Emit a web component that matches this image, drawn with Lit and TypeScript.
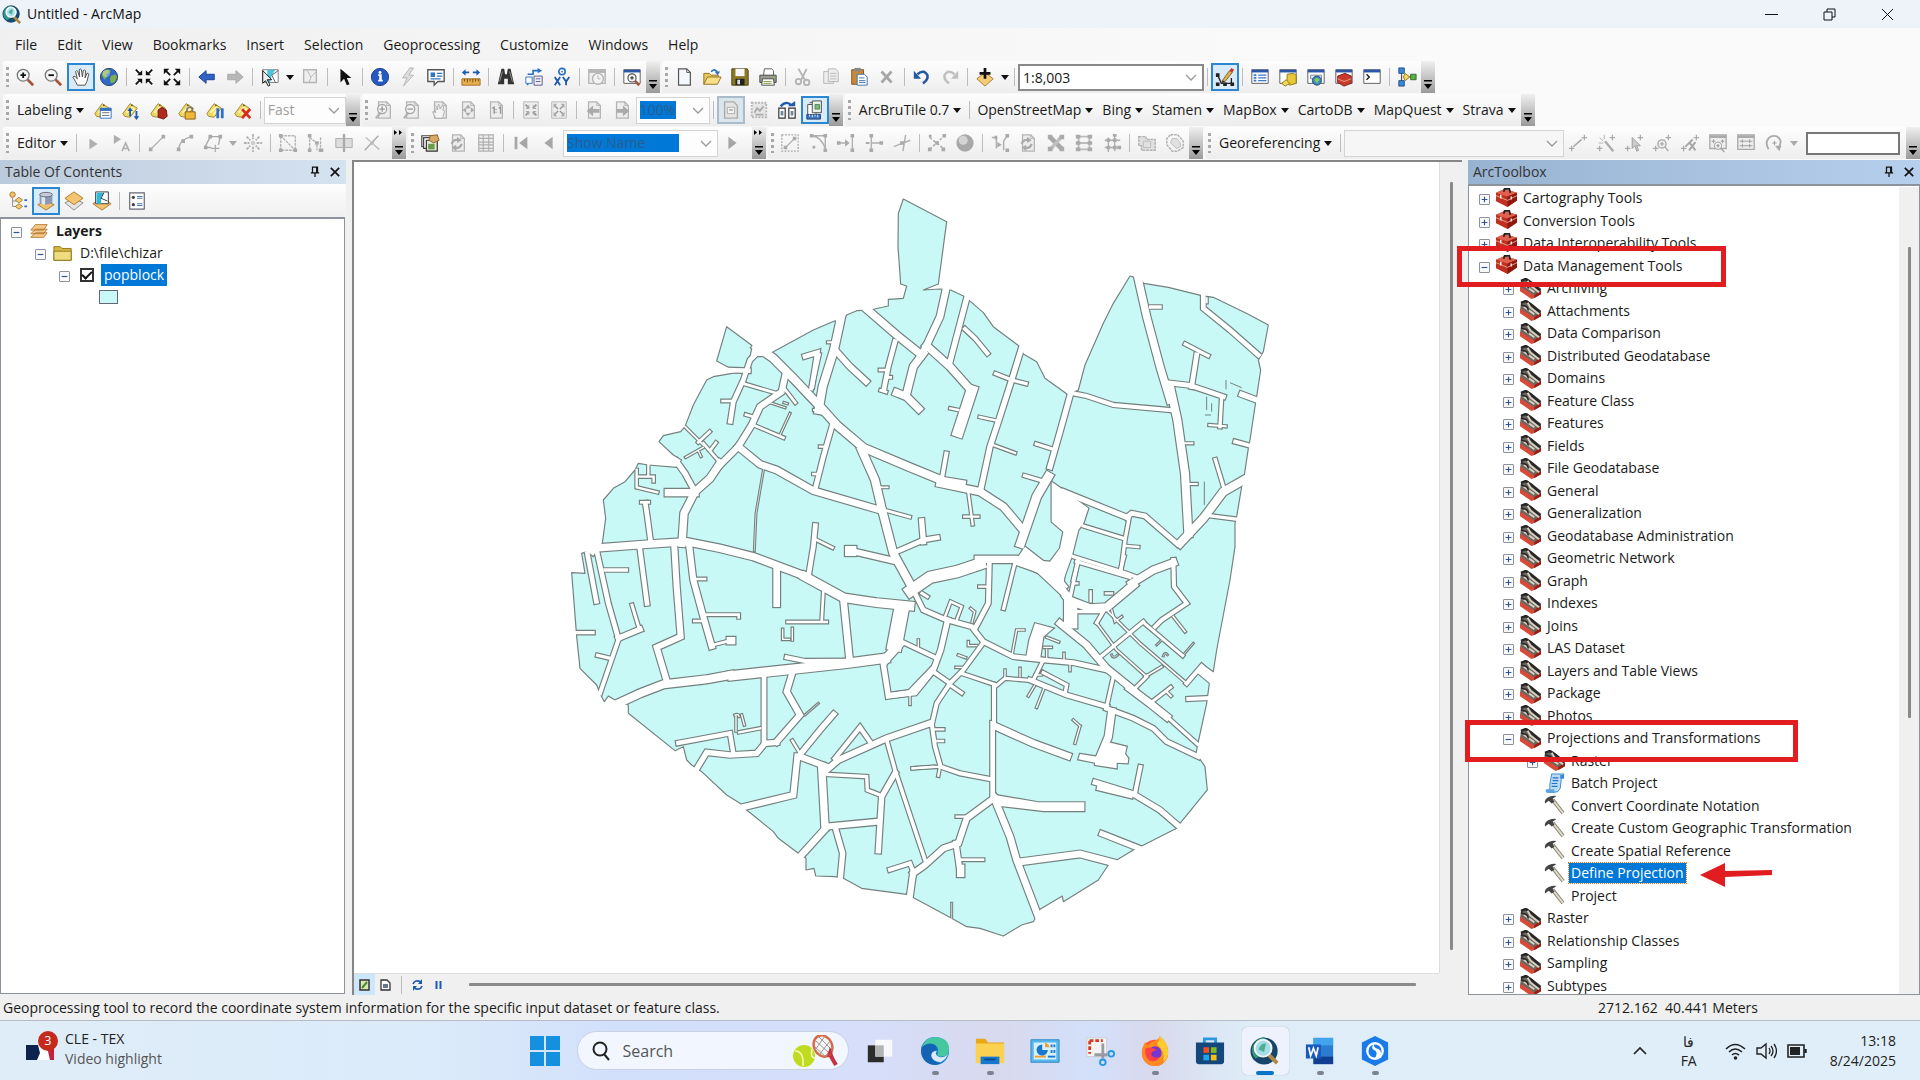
import { LitElement, html, svg, css } from "lit";
import { customElement } from "lit/decorators.js";
import { classMap } from "lit/directives/class-map.js";

/* ---------- icon set, drawn on a 22 x 22 grid ---------- */
const G = "#b4b4b4";
const tag = svg`<path d="M2 15L10 4l8 5-8 10-6-1z" fill="#f0d860" stroke="#9a8430"/><path d="M6 14l7-7M9 16l6-7" stroke="#fff6b8" stroke-width="2"/><circle cx="12" cy="6" r="1" fill="#6a5a20"/>`;
const page = svg`<path d="M5 2h9l4 4v14H5z" fill="#ededed" stroke="${G}" stroke-width="1.4"/><path d="M14 2v4h4" fill="none" stroke="${G}"/>`;
const win = svg`<path d="M2 3h18v15H2z" fill="#fff" stroke="#555"/><path d="M2 3h18v3H2z" fill="#2a55a8"/>`;
const cross = svg`<path d="M1 17h6M4 14v6M15 5h6M18 2v6" stroke="#aaa" stroke-width="1.4"/>`;

const icons: Record<string, any> = {
  zoomIn: svg`<path d="M14 14l6 6" stroke="#a4573a" stroke-width="3"/><circle cx="9" cy="9" r="6.5" fill="#f4f4f4" stroke="#777" stroke-width="1.4"/><path d="M6 9h6M9 6v6" stroke="#111" stroke-width="2"/>`,
  zoomOut: svg`<path d="M14 14l6 6" stroke="#a4573a" stroke-width="3"/><circle cx="9" cy="9" r="6.5" fill="#f4f4f4" stroke="#777" stroke-width="1.4"/><path d="M6 9h6" stroke="#111" stroke-width="2"/>`,
  hand: svg`<path d="M7 20l-2-4-3-5q1-2 3 0l2 2L5 5q1-2 2.500 0l2 6L9 3q1-2 2.500 0l1 8 1-7q2-1.500 2.500 0l-.5 8 2-5q2-.5 2 1l-2 8-2 4z" fill="#fff" stroke="#555" stroke-width="1.100"/>`,
  globe: svg`<circle cx="11" cy="11" r="9.500" fill="#2f68c8"/><path d="M4 5q5-4 9-1l-2 3-3 1 1 3-3 3-3-5zM13 10l5-2 2 3-3 6-4 1-1-4z" fill="#7cae4c"/><circle cx="8" cy="7" r="4" fill="#fff" opacity=".35"/><circle cx="11" cy="11" r="9.500" fill="none" stroke="#24406e"/>`,
  shrink: svg`<path d="M2 3l5 5M20 3l-5 5M2 19l5-5M20 19l-5-5" stroke="#111" stroke-width="2"/><path d="M9 3.500V9H3.500zM13 3.500V9h5.500zM9 18.500V13H3.500zM13 18.500V13h5.500z" fill="#111"/>`,
  grow: svg`<path d="M4 4l5 5M18 4l-5 5M4 18l5-5M18 18l-5-5" stroke="#111" stroke-width="2"/><path d="M2 2h6L2 8zM20 2h-6l6 6zM2 20h6l-6-6zM20 20h-6l6-6z" fill="#111"/>`,
  back: svg`<path d="M2 11l8-7v4h9v6h-9v4z" fill="#2f62c4" stroke="#16408c"/>`,
  fwd: svg`<path d="M20 11l-8-7v4H3v6h9v4z" fill="#b8b8b8" stroke="#a8a8a8"/>`,
  selectFeat: svg`<path d="M3 3h17v14H3z" fill="#fff" stroke="#777"/><path d="M8 3h9l-4 6-2 8H8z" fill="#4cc4dc"/><path d="M13 9l7-5M13 9l4 8" stroke="#555"/><path d="M3 4v14l3-3 3 6 2-1-3-6h5z" fill="#eee" stroke="#111"/>`,
  clearSel: svg`<path d="M4 3h14v14H4z" fill="#eee" stroke="${G}" stroke-width="1.500"/><path d="M8 4l4 7 6-6M12 11l-2 6" fill="none" stroke="${G}"/>`,
  arrow: svg`<path d="M6 2v15l4-4 3 7 3-1-3-7h5z" fill="#111"/>`,
  info: svg`<circle cx="11" cy="11" r="9.500" fill="#2558c0" stroke="#1c3f86"/><path d="M9 9h3v6h2H9h2v-5" stroke="#fff" stroke-width="1.800" fill="none"/><circle cx="11" cy="6" r="1.600" fill="#fff"/>`,
  bolt: svg`<path d="M13 1L5 12h5l-4 9L17 9h-5l5-8z" fill="#ddd" stroke="${G}"/>`,
  popup: svg`<path d="M2 3h18v13h-7l-4 4v-4H2z" fill="#fff" stroke="#555" stroke-width="1.500"/><path d="M5 6h5v5H5z" fill="#3475c0"/><path d="M12 7h6M12 10h6M5 13h11" stroke="#3475c0" stroke-width="1.500"/>`,
  measure: svg`<path d="M1 13h20v7H1z" fill="#e8b04c" stroke="#a06a20"/><path d="M4 13v3M7 13v4M10 13v3M13 13v4M16 13v3M19 13v3" stroke="#704810"/><path d="M1 6l4-3.500v7zM21 6l-4-3.500v7zM5 5h4v2H5zM13 5h4v2h-4z" fill="#1c5ab0"/>`,
  find: svg`<path d="M6 2h3l1 6h2l1-6h3l4 17h-7v-6H9v6H2z" fill="#333"/><path d="M4 16l3-11M18 16L15 5" stroke="#999"/>`,
  route: svg`<path d="M4 8h6v-4h6M4 20v-7" fill="none" stroke="#2a6fc0" stroke-width="1.800"/><path d="M15 1l5 3-5 3z" fill="#2a6fc0"/><path d="M2 11h7v7H2z" fill="#fff" stroke="#2a6fc0"/><path d="M11 10h9v10h-9z" fill="#eef" stroke="#557"/><path d="M13 13h5M13 16h5" stroke="#557"/>`,
  goxy: svg`<circle cx="11" cy="5" r="3.500" fill="none" stroke="#2a6fc0" stroke-width="1.800"/><circle cx="11" cy="5" r="1" fill="#2a6fc0"/><path d="M3 11l6 9M9 11l-6 9M12 11l3.500 5L19 11M15.500 16v4" stroke="#1c5ab0" stroke-width="2" fill="none"/>`,
  time: svg`<path d="M2 3h18v15H2z" fill="#eee" stroke="${G}" stroke-width="1.500"/><path d="M2 5h18" stroke="${G}" stroke-width="3"/><circle cx="12" cy="13" r="6" fill="#f4f4f4" stroke="${G}" stroke-width="1.500"/><path d="M12 9v4h3" fill="none" stroke="${G}"/>`,
  viewer: svg`${win}<path d="M14 15l5 5" stroke="#a4573a" stroke-width="3"/><circle cx="11" cy="12" r="4.500" fill="#f4f4f4" stroke="#555" stroke-width="1.300"/><path d="M9 12h4M11 10v4" stroke="#111"/>`,
  newDoc: svg`<path d="M5 2h9l4 4v14H5z" fill="#f4f8fd" stroke="#555" stroke-width="1.300"/><path d="M14 2v4h4" fill="none" stroke="#555"/>`,
  open: svg`<path d="M2 19V7h6l2 2h8v3" fill="#e8c858" stroke="#907020"/><path d="M2 19l4-8h15l-4 8z" fill="#f8e08a" stroke="#907020"/><path d="M10 5q5-4 7 1" fill="none" stroke="#2a6fc0" stroke-width="1.800"/><path d="M14 5h6l-3 4z" fill="#2a6fc0"/>`,
  save: svg`<path d="M2 2h17l1 2v16H2z" fill="#8a7a28" stroke="#44400f"/><path d="M6 2h10v8H6z" fill="#f6f6f6"/><path d="M6 13h10v7H6z" fill="#222"/><path d="M8 14h3v5H8z" fill="#ddd"/>`,
  print: svg`<path d="M7 2h8l2 2v6H6z" fill="#fff" stroke="#555"/><path d="M2 9h18v8H2z" fill="#9a9a90" stroke="#444"/><path d="M5 13h12l1 7H4z" fill="#fff" stroke="#444"/><path d="M6 16h9M6 18h9" stroke="#7a9a3a"/><circle cx="18" cy="11" r="1" fill="#7c4"/>`,
  cut: svg`<path d="M6 2l7 12M15 2L9 14" stroke="${G}" stroke-width="2"/><circle cx="6" cy="16" r="3" fill="none" stroke="${G}" stroke-width="2"/><circle cx="15" cy="17" r="3" fill="none" stroke="${G}" stroke-width="2"/>`,
  copy: svg`<path d="M3 5h8l3 3v10H3z" fill="#eee" stroke="${G}"/><path d="M8 2h8l3 3v11H8z" fill="#eee" stroke="${G}"/><path d="M10 7h7M10 10h7M10 13h7" stroke="${G}"/>`,
  paste: svg`<path d="M3 3h13v16H3z" fill="#c88a3a" stroke="#7a4f18"/><path d="M6 1h7v4H6z" fill="#888"/><path d="M9 8h8l3 3v9H9z" fill="#fff" stroke="#3a6cb0"/><path d="M11 12h6M11 15h7M11 17h7" stroke="#3a6cb0"/>`,
  del: svg`<path d="M5 5l11 12M16 5L5 17" stroke="#a6a6a6" stroke-width="3"/>`,
  undo: svg`<path d="M6 8q7-6 11 1 1 5-5 9" fill="none" stroke="#2458a0" stroke-width="2.800"/><path d="M2 4v9h8z" fill="#2458a0"/>`,
  redo: svg`<path d="M16 8q-7-6-11 1-1 5 5 9" fill="none" stroke="#c0c0c0" stroke-width="2.800"/><path d="M20 4v9h-8z" fill="#c0c0c0"/>`,
  addData: svg`<path d="M11 6l9 7-9 8-9-8z" fill="#f4cc78" stroke="#a87828"/><path d="M11 1v12M5 7h12" stroke="#111" stroke-width="3"/>`,
  editTb: svg`<path d="M3 9l4 9h11M18 18V12" fill="none" stroke="#222" stroke-width="1.500"/><path d="M1 7h4v4H1zM1 17h4v4H1zM9 17h4v4H9zM17 17h4v4h-4z" fill="#222"/><path d="M8 15l8-11 3 2-8 10z" fill="#e8b04c" stroke="#7a5a20"/><path d="M16 4l2-3 3 2-2 3z" fill="#c33"/><path d="M8 15l3 1-4 2z" fill="#222"/>`,
  tocWin: svg`${win}<path d="M4 8h3v2H4zM4 11h3v2H4zM4 14h3v2H4z" fill="#3a78c8"/><path d="M9 9h9M9 12h9M9 15h9" stroke="#3a78c8" stroke-width="1.500"/>`,
  catalog: svg`${win}<path d="M10 8l7-1 3 2v9l-7 2-3-2z" fill="#e8c838" stroke="#8a7418"/><path d="M4 18l5-4 4 4-5 3z" fill="#f0d858" stroke="#8a7418"/>`,
  searchWin: svg`${win}<path d="M5 9h12v4H5z" fill="#dce8f4" stroke="#789"/><circle cx="12" cy="15" r="5" fill="#3a88c8" stroke="#246"/><path d="M9 14q3-4 6 0l-3 4z" fill="#8c5"/>`,
  toolWin: svg`${win}<path d="M4 10l8-3 7 3v8l-8 3-7-4z" fill="#c83a2c" stroke="#7a1c14"/><path d="M4 13l7 3 8-3" stroke="#f0a090" fill="none"/>`,
  python: svg`${win}<path d="M5 8l3 3-3 3" fill="none" stroke="#222" stroke-width="1.600"/>`,
  model: svg`<path d="M5 5v12M8 11h8" stroke="#555" stroke-width="1.300"/><path d="M2 1h6v6H2zM2 15h6v6H2z" fill="#3a88d8" stroke="#1c4c88"/><path d="M9 7l5 4-5 4-2-4z" fill="#f0d858" stroke="#8a7418"/><path d="M15 8h6v6h-6z" fill="#58b048" stroke="#2c6a20"/>`,
  lab1: svg`${tag}<path d="M8 9h12v11H8z" fill="#fff" stroke="#2a6fc0"/><path d="M8 9h12v3H8z" fill="#2a6fc0"/><path d="M10 14h8M10 17h8" stroke="#666"/>`,
  lab2: svg`${tag}<path d="M10 10v8M17 12v8" stroke="#1c5ab0" stroke-width="2"/><path d="M7 12l3-4 3 4zM14 18l3 4 3-4z" fill="#1c5ab0"/>`,
  lab3: svg`${tag}<path d="M10 11l4-3 5 3 1 7-4 3-6-2z" fill="#b02a20" stroke="#6a1410"/>`,
  lab4: svg`${tag}<path d="M11 13v-3q3-4 6 0v3" fill="none" stroke="#777" stroke-width="1.800"/><path d="M9 13h11v8H9z" fill="#f0b838" stroke="#8a5c10"/>`,
  lab5: svg`${tag}<path d="M14 9v11M19 9v11" stroke="#2a6fd0" stroke-width="3"/>`,
  lab6: svg`${tag}<path d="M10 10l9 10M19 10l-9 10" stroke="#d82a20" stroke-width="3"/>`,
  lyZin: svg`${page}<path d="M8 13l-6 7" stroke="${G}" stroke-width="2.500"/><circle cx="9" cy="10" r="5" fill="#f4f4f4" stroke="#a6a6a6" stroke-width="1.500"/><path d="M6 10h6M9 7v6" stroke="#999" stroke-width="1.500"/>`,
  lyZout: svg`${page}<path d="M8 13l-6 7" stroke="${G}" stroke-width="2.500"/><circle cx="9" cy="10" r="5" fill="#f4f4f4" stroke="#a6a6a6" stroke-width="1.500"/><path d="M6 10h6" stroke="#999" stroke-width="1.500"/>`,
  lyPan: svg`${page}<path d="M6 20l-3-7q1-1 3 1L5 7q2-2 3 4l1-6q2-1 2 5l3-4q2 0 0 5l2 1-2 8z" fill="#f4f4f4" stroke="#a6a6a6"/>`,
  lyFull: svg`${page}<path d="M11 5l3 4H8zM11 18l3-4H8zM5 11l4-3v6zM18 11l-4-3v6z" fill="#aaa"/>`,
  ly11: svg`${page}<path d="M7 9l2-1v7M11 10v1M11 13v1M14 9l2-1v7" stroke="#999" stroke-width="1.600" fill="none"/>`,
  lyIn: svg`<path d="M3 2h16v18H3z" fill="#ededed" stroke="${G}"/><path d="M5 5l4 4M17 5l-4 4M5 17l4-4M17 17l-4-4" stroke="#999" stroke-width="2"/><path d="M9 5v5H5zM13 5v5h4zM9 17v-5H5zM13 17v-5h4z" fill="#aaa"/>`,
  lyOut: svg`<path d="M3 2h16v18H3z" fill="#ededed" stroke="${G}"/><path d="M6 6l4 4M16 6l-4 4M6 16l4-4M16 16l-4-4" stroke="#999" stroke-width="1.600"/><path d="M5 4h4L5 9zM17 4h-4l4 5zM5 18h4l-4-5zM17 18h-4l4-5z" fill="#aaa"/>`,
  lyBack: svg`${page}<path d="M3 12l7-6v4h7v4h-7v4z" fill="#aaa"/>`,
  lyFwd: svg`${page}<path d="M19 12l-7-6v4H5v4h7v4z" fill="#aaa"/>`,
  draft: svg`<path d="M4 2h10l4 4v14H4z" fill="#e4e4e4" stroke="#aaa" stroke-width="1.500"/><path d="M7 8h8v7H7z" fill="#f4f4f4" stroke="#aaa"/><path d="M9 11h4" stroke="#999" stroke-width="1.500"/>`,
  frameF: svg`<path d="M3 3h16v16H3z" fill="#e6e6e6" stroke="${G}" stroke-dasharray="2 1.500" stroke-width="2"/><path d="M6 14l3-5 3 3 4-5M7 16h9" fill="none" stroke="#aaa" stroke-width="2"/>`,
  layoutSw: svg`<path d="M2 9h7v11H2zM13 9h7v11h-7z" fill="#fff" stroke="#333" stroke-width="1.300"/><path d="M4 7q6-7 12-1" fill="none" stroke="#1c5ab0" stroke-width="2.600"/><path d="M12 7h8V1z" fill="#1c5ab0"/><path d="M4 12h3v5H4zM15 12h3v5h-3z" fill="#6a8a9a"/>`,
  dataDr: svg`<path d="M3 5h9v11H3zM5 3h9v11" fill="#fff" stroke="#444"/><path d="M8 1h10v13H8z" fill="#e8f4e8" stroke="#444"/><path d="M11 5h5v5h-5z" fill="#88b868" stroke="#486"/><path d="M2 16h15v5H2z" fill="#3a78c8" stroke="#1c3c70"/><path d="M5 16v2M8 16v3M11 16v2M14 16v3" stroke="#fff"/>`,
  play: svg`<path d="M7 4v14l9-7z" fill="#a6a6a6"/>`,
  prev: svg`<path d="M15 4v14l-9-7z" fill="#a6a6a6"/>`,
  first: svg`<path d="M18 4v14l-9-7zM4 4h3v14H4z" fill="#a6a6a6"/>`,
  edArrow: svg`<path d="M6 6v12l9-6z" fill="#b0b0b0"/>`,
  edAnno: svg`<path d="M2 2v10l8-5z" fill="#b0b0b0"/><path d="M11 20l4-9 4 9M12 17h6" fill="none" stroke="#b0b0b0" stroke-width="1.800"/>`,
  seg: svg`<path d="M4 18L18 4" stroke="#aaa" stroke-width="1.300"/><path d="M2 16h4v4H2zM16 2h4v4h-4z" fill="#aaa"/>`,
  arc: svg`<path d="M4 18Q5 7 18 4" fill="none" stroke="#aaa" stroke-width="1.300"/><path d="M2 16h4v4H2zM7 7h4v4H7zM16 2h4v4h-4z" fill="#aaa"/>`,
  poly: svg`<path d="M8 4h11l-2 9M8 4L2 16h7" fill="none" stroke="#aaa" stroke-width="1.500"/><path d="M6 2h4v4H6zM17 2h4v4h-4zM1 14h4v4H1z" fill="#aaa"/><path d="M9 17h9M13.500 13v8" stroke="#aaa" stroke-width="1.300"/>`,
  star: svg`<path d="M11 1v6M11 15v6M1 11h6M15 11h6M4 4l4 4M18 4l-4 4M4 18l4-4M18 18l-4-4" stroke="#b0b0b0" stroke-width="2" stroke-dasharray="3 1"/><circle cx="11" cy="11" r="2.500" fill="#ccc"/>`,
  edv: svg`<path d="M3 3h16v16H3zM3 3l16 16" fill="none" stroke="#b4b4b4" stroke-width="1.500" stroke-dasharray="3 1"/><path d="M1 1h4v4H1zM17 17h4v4h-4zM1 17h4v4H1z" fill="#aaa"/>`,
  resh: svg`<path d="M4 3v16M4 5l8 6v8M16 5v14" fill="none" stroke="#b0b0b0" stroke-width="1.500" stroke-dasharray="3 1"/><path d="M2 1h4v4H2zM2 17h4v4H2zM10 9h4v4h-4zM14 17h5v4h-5z" fill="#aaa"/>`,
  cutp: svg`<path d="M2 6h18v10H2z" fill="#ddd" stroke="#aaa"/><path d="M11 1v20" stroke="#aaa" stroke-width="2.500"/>`,
  split: svg`<path d="M3 19L18 3" stroke="#aaa" stroke-width="1.500"/><path d="M4 5l5 4M13 13l6 5" stroke="#bbb" stroke-width="1.500"/><path d="M9 9h4v4H9z" fill="#bbb"/>`,
  tree: svg`<path d="M2 3h12v12H2z" fill="#fff" stroke="#444" stroke-width="1.300"/><path d="M4 5h12v12H4z" fill="#fff" stroke="#444" stroke-width="1.300"/><path d="M7 8h12v12H7z" fill="#dfe8d0" stroke="#333" stroke-width="1.300"/><path d="M9 12h7v6H9z" fill="#6a9a4a"/><path d="M11 3l8-1 2 6-6 3-5-3z" fill="#d8a868" stroke="#8a5c28"/>`,
  refresh: svg`${page}<path d="M4 12q2-6 8-4M15 12q-2 6-8 4" fill="none" stroke="#aaa" stroke-width="2.500"/><path d="M10 4l5 4-5 3zM9 20l-5-4 5-3z" fill="#aaa"/>`,
  table: svg`<path d="M3 2h16v18H3zM3 6h16M3 10h16M3 13h16M3 17h16M8 2v18M14 2v18" fill="#eee" stroke="#b0b0b0" stroke-width="1.300"/>`,
  t1: svg`<path d="M2 2h18v18H2z" fill="none" stroke="#aaa" stroke-width="1.400" stroke-dasharray="2 1.500"/><path d="M6 16L16 6" stroke="#aaa" stroke-width="1.300"/><path d="M4 14h4v4H4zM14 4h4v4h-4z" fill="#aaa"/>`,
  t2: svg`<path d="M3 3h16v16M5 3q10 2 14 14" fill="none" stroke="#b0b0b0" stroke-width="1.500"/><path d="M2 1h4v4H2zM17 1h4v4h-4zM17 17h4v4h-4zM5 14h3v3H5z" fill="#aaa"/>`,
  t3: svg`<path d="M18 3v16M2 11h11" stroke="#b0b0b0" stroke-width="1.500"/><path d="M10 7l5 4-5 4zM1 9h4v4H1zM16 1h4v4h-4zM16 17h4v4h-4z" fill="#aaa"/>`,
  t4: svg`<path d="M8 3v16M8 11h11" stroke="#b0b0b0" stroke-width="1.500"/><path d="M6 1h4v4H6zM6 17h4v4H6zM17 9h4v4h-4zM2 10h4v2H2z" fill="#aaa"/>`,
  t5: svg`<path d="M2 15l18-7M15 2l-3 18" stroke="#b0b0b0" stroke-width="1.600"/><path d="M9 9h4v4H9z" fill="#aaa"/>`,
  t6: svg`<path d="M3 18L19 3M3 5l15 12" stroke="#aaa" stroke-width="1.600" stroke-dasharray="3 2"/><path d="M1 16h4v4H1zM9 9h4v4H9zM17 1h4v4h-4zM16 16h4v4h-4zM2 2h3v3H2z" fill="#aaa"/>`,
  sphere: svg`<circle cx="11" cy="11" r="9.500" fill="#a8a8a8"/><circle cx="9" cy="8" r="5" fill="#d4d4d4"/>`,
  t7: svg`<path d="M2 5h5v12M19 3l-4 6v10" fill="none" stroke="#b0b0b0" stroke-width="1.600"/><path d="M8 10l5 3-5 3zM17 1h4v4h-4zM17 17h4v4h-4zM5 3h3v4H5z" fill="#aaa"/>`,
  t8: svg`<path d="M5 5l13 13" stroke="#a8a8a8" stroke-width="5"/><path d="M17 4L5 18" stroke="#c0c0c0" stroke-width="4"/><path d="M2 2h5v5H2zM15 2h5v5h-5zM2 15h5v5H2zM15 15h5v5h-5z" fill="#aaa"/>`,
  t9: svg`<path d="M4 4h14M4 11h14M4 18h14M5 4v14M17 4v14" stroke="#bbb" stroke-width="2"/><path d="M2 2h5v4H2zM15 2h5v4h-5zM2 9h5v4H2zM15 9h5v4h-5zM2 16h5v4H2zM15 16h5v4h-5z" fill="#aaa"/>`,
  t10: svg`<path d="M3 8h17M3 16h17M7 5v16M14 2v18" stroke="#b0b0b0" stroke-width="1.500"/><path d="M5 6h4v4H5zM12 6h4v4h-4zM5 14h4v4H5zM12 14h4v4h-4zM17 14h4v4h-4zM12 1h4v3h-4z" fill="#aaa"/>`,
  t11: svg`<path d="M2 4h8v3h10v12H5v-5H2z" fill="#e0e0e0" stroke="#b0b0b0" stroke-width="1.600" stroke-dasharray="3 1"/><path d="M7 9h8v7H7z" fill="none" stroke="#bbb"/>`,
  t12: svg`<path d="M6 2h8l6 7v7l-6 4H8L2 13V6z" fill="none" stroke="#b0b0b0" stroke-width="1.600" stroke-dasharray="3 1"/><path d="M8 6h5l4 5v4l-4 2-7-6z" fill="#e0e0e0" stroke="#bbb"/>`,
  g1: svg`${cross}<path d="M6 15l9-8" stroke="#aaa" stroke-width="1.600"/>`,
  g2: svg`${cross}<path d="M10 9l9 11" stroke="#aaa" stroke-width="2.500"/><path d="M9 2v5M4 5l4 4M3 11h5" stroke="#aaa"/>`,
  g3: svg`${cross}<path d="M9 5v12l3-3 2 6 2-1-2-5h4z" fill="#ccc" stroke="#999"/>`,
  g4: svg`${cross}<circle cx="11" cy="12" r="4.500" fill="#eee" stroke="#aaa" stroke-width="1.500"/><path d="M9 12h4M11 10v4M14 15l4 5" stroke="#aaa" stroke-width="1.500"/>`,
  g5: svg`${cross}<path d="M10 10l7 9M17 10l-7 9M6 15l8-8" stroke="#a6a6a6" stroke-width="2.200"/>`,
  g6: svg`<path d="M2 2h18v15H2z" fill="#eee" stroke="#aaa" stroke-width="1.500"/><path d="M2 4h18" stroke="#aaa" stroke-width="3"/><path d="M4 9h4M6 7v4M14 9h4M16 7v4" stroke="#999"/><circle cx="11" cy="14" r="4" fill="#f4f4f4" stroke="#999"/><path d="M14 17l4 4M9 14h4M11 12v4" stroke="#999" stroke-width="1.300"/>`,
  g7: svg`<path d="M2 2h18v16H2z" fill="#eee" stroke="#aaa" stroke-width="1.500"/><path d="M2 4h18" stroke="#aaa" stroke-width="3"/><path d="M4 9h14M4 14h14M7 7v4M7 12v4M15 7v4M15 12v4" stroke="#999"/>`,
  g8: svg`<path d="M5 18Q0 9 7 4q8-3 11 4 1 5-3 9" fill="none" stroke="#aaa" stroke-width="2"/><path d="M12 14h7l-2 6z" fill="#aaa"/><path d="M9 11h5M11.500 8.500v5" stroke="#999"/>`,
  listDraw: svg`<circle cx="5" cy="4" r="3" fill="#f0c070" stroke="#a87828"/><path d="M5 7v10h6M5 11h6" fill="none" stroke="#888"/><path d="M12 7l4 3-4 3-4-3zM12 14l4 3-4 3-4-3z" fill="#f4cc78" stroke="#a87828"/><path d="M18 10h3M18 17h3" stroke="#2a6fc0" stroke-width="2"/>`,
  listSrc: svg`<path d="M11 21l-9-6 9-4 9 4z" fill="#f0c070" stroke="#a87828"/><path d="M4 4v9q7 4 14 0V4z" fill="#8a9ab0"/><path d="M6 5v9q2 1 4 1V5z" fill="#dfe6f0"/><ellipse cx="11" cy="4" rx="7" ry="2.500" fill="#c4ccd8" stroke="#667"/>`,
  listVis: svg`<path d="M1 13l10 8 10-8-10-5z" fill="#e4e4e4" stroke="#888"/><path d="M1 8l10 7 10-7L11 1z" fill="#f4c470" stroke="#a87828"/>`,
  listSel: svg`<path d="M1 14l10 7 10-7-10-6z" fill="#f4c470" stroke="#a87828"/><path d="M4 1h14v13H4z" fill="#fff" stroke="#333"/><path d="M5 2h8l-3 5v7H5z" fill="#30b8d8"/><path d="M13 2l-3 6 7 3" fill="none" stroke="#333"/>`,
  options: svg`<path d="M3 2h16v18H3z" fill="#fff" stroke="#667" stroke-width="1.300"/><circle cx="7" cy="7" r="1.800" fill="#444"/><circle cx="7" cy="15" r="1.800" fill="#444"/><path d="M11 6h6M11 8h6M11 14h6M11 16h6" stroke="#4a7ab0" stroke-width="1.200"/>`,
  layers: svg`<path d="M2 18l5-5h13l-4 5zM2 14l5-5h13l-4 5zM2 10l5-6h13l-4 6z" fill="#f6c98a" stroke="#b07830"/>`,
  folder: svg`<path d="M1 19V4h7l2 2h10v13z" fill="#d8b840" stroke="#8a7418"/><path d="M1 19V9h19v10z" fill="#f0dc80" stroke="#8a7418"/>`,
  toolbox: svg`<path d="M0 5l9-4 13 4v8l-10 7L0 14z" fill="#c0301f"/><path d="M0 5l9-4 13 4-10 4z" fill="#e0614f"/><path d="M12 9l10-4v8l-10 7z" fill="#8e180f"/><path d="M8 4l1-3h5l1 4" fill="none" stroke="#222" stroke-width="1.800"/><path d="M0 8l12 5 10-5" stroke="#f0a090" fill="none"/><path d="M5 7v4M16 9v3" stroke="#f4e8e4" stroke-width="1.600"/>`,
  toolset: svg`<path d="M1 3l6-3 15 11v6l-7 4L0 12z" fill="#6a6660"/><path d="M0 9l15 9v3l-3 1L0 14z" fill="#d84a38"/><path d="M15 18l7-5v4l-7 4z" fill="#9c1c12"/><path d="M1 3l5-2 6 4 9 8" stroke="#262626" stroke-width="2.500" fill="none"/><path d="M8 3l3 5 9 7M4 7l11 8" stroke="#d8d0c0" stroke-width="2" fill="none"/><path d="M1 5l6 2 2 4" stroke="#262626" stroke-width="1.600" fill="none"/>`,
  hammer: svg`<path d="M9 5l11 14" stroke="#8a8674" stroke-width="4"/><path d="M9 5l11 14" stroke="#e0dccc" stroke-width="2"/><path d="M1 9q-1-5 4-7 5-2 8-1l-4 3 2 3-3 2-3-3z" fill="#444"/>`,
  script: svg`<path d="M8 1h13q-3 2-3 6l-1 9q-2 5-6 4H3q4-2 3-7z" fill="#b8dcf8" stroke="#3a88c8"/><path d="M9 5h6M9 8h6M8 11h6M8 14h6" stroke="#2a6fc0" stroke-width="1.300"/><path d="M2 17h9q-1 4 2 4H4q-3-1-2-4z" fill="#5aa4e4"/><path d="M17 2h4v4h-4z" fill="#3a88d8"/>`,
  arcmap: svg`<circle cx="10" cy="11" r="9.500" fill="#17486e"/><path d="M2 8q3-6 8-6l3 4-5 4 1 6-4 2q-5-5-3-10z" fill="#2e9a8c"/><path d="M13 14l7 7" stroke="#b08848" stroke-width="3"/><circle cx="10" cy="9" r="5.500" fill="#b4e4f0" stroke="#fff" stroke-width="1.500"/><path d="M7 9q2-4 5-3l-1 6z" fill="#4ab0a0"/>`,
};
const icon = (n: string, c = "ic") => html`<svg class=${c} viewBox="0 0 22 22" aria-hidden="true">${icons[n]}</svg>`;

const sep = html`<span class="sep"></span>`;
const grip = html`<span class="grip"></span>`;
const caret = html`<svg class="caret" viewBox="0 0 8 5" aria-hidden="true"><path d="M0 0h8L4 5z"/></svg>`;
const caretOff = html`<svg class="caret off" viewBox="0 0 8 5" aria-hidden="true"><path d="M0 0h8L4 5z"/></svg>`;
const chev = html`<svg class="chev" viewBox="0 0 12 7" aria-hidden="true"><path d="M1 1l5 5 5-5"/></svg>`;
const endCap = (more = false) => html`<button class=${classMap({ end: true, more })} aria-label="Toolbar options"><svg viewBox="0 0 10 28" aria-hidden="true">${more ? svg`<path d="M0 1l3 2.500L0 6zM5 1l3 2.500L5 6z"/>` : null}<path d="M1 17h8v1.500H1zM1 21h8l-4 5z"/></svg></button>`;
/* "|" draws a separator, "v"/"V" a disabled/enabled caret, "*" marks a pressed tool */
const tools = (list: string) => list.split(" ").map((t) => {
  if (t === "|") return sep;
  if (t === "V") return caret;
  if (t === "v") return caretOff;
  const on = t.endsWith("*"), dim = t.endsWith("~"), n = t.replace(/[*~]/, "");
  return html`<button class=${classMap({ tool: true, on, dim })} aria-label=${n}>${icon(n)}</button>`;
});
const drop = (t: string) => html`<button class="drop">${t}${caret}</button>`;

/* ---------- map geometry, three units to a pixel ---------- */
const outline = "M1030 57L1160 125 1135 312 1090 330 1140 327 1172 330 1215 350 1232 365 1270 398 1300 440 1380 500 1390 522 1430 545 1455 595 1525 645 1555 630 1575 555 1630 430 1660 370 1710 288 1723 292 1752 310 1825 322 1925 347 1960 352 2065 403 2125 435 2110 515 2095 540 2102 570 2090 650 2085 680 2070 780 2065 805 2053 885 2045 920 2030 1010 2025 1030 2025 1100 2010 1200 1970 1410 1960 1475 1925 1450 1905 1475 1948 1510 1940 1570 1915 1685 1908 1720 1935 1760 1942 1830 1860 1930 1850 1945 1745 1998 1720 2010 1670 2040 1645 2055 1615 2100 1510 2165 1507 2148 1440 2188 1420 2225 1385 2235 1330 2268 1260 2245 1220 2240 1175 2215 1058 2152 1040 2143 905 2125 850 2095 825 2090 767 2088 762 2065 738 2070 738 2035 715 2020 655 1975 640 1955 560 1890 540 1870 500 1845 425 1775 395 1755 380 1740 370 1700 345 1712 205 1600 205 1575 170 1563 145 1548 133 1565 122 1545 110 1515 60 1465 50 1370 35 1178 75 1180 65 1120 80 1115 100 1130 127 1090 137 1015 130 960 160 925 195 905 225 870 235 850 265 855 350 862 365 840 340 825 297 785 310 767 362 755 375 740 400 675 440 600 460 590 530 578 545 575 505 562 470 543 500 440 577 497 570 530 605 530 640 515 760 450 825 422 835 430 860 405 890 392 930 390 985 378 985 358 1030 355 1040 318 1022 312 1014 200 1015 100Z";

type Street = [number, string];
interface Tile { x: number; y: number; streets: Street[]; }
const tiles: Tile[] = [
  { x: 0, y: 0, streets: [
    [24, "M590 500L640 535 700 595 785 685 830 735 910 803 1050 862 1150 903 1205 912"],
    [24, "M850 380L835 450 822 510 788 620 776 690"], [18, "M830 515L870 560 918 604"],
    [22, "M900 370L1010 465 1085 525"], [22, "M1090 520L1060 560 1040 640"], [22, "M1010 638L1040 650 1076 686"],
    [20, "M1162 310L1140 410 1105 485 1085 525"], [14, "M1005 485L985 560 972 626"], [8, "M960 570h15M980 592h12M962 631L978 636"],
    [22, "M1100 497L1170 560 1228 625"], [12, "M1159 821L1145 900"], [14, "M817 735L790 830 766 925"], [7, "M780 800h12M760 882h14"],
    [20, "M535 800L600 853 650 870 760 932 960 990"], [2, "M612 860L588 1000 583 1112"],
    [22, "M480 850L450 895 405 935 372 1000 366 1090"], [18, "M676 585L665 635 600 680 575 735 535 800 480 855"],
    [8, "M555 612L650 640M488 663h32M580 735L670 773M675 628L706 668M558 704L585 712"],
    [14, "M600 510L570 540 550 600 520 665 511 724"], [14, "M500 570L565 572"],
    [3, "M660 765L690 700M620 665L675 683M672 668l10 3"], [5, "M375 740L430 795"], [8, "M430 790L480 848M449 755L415 787M468 788L450 812"], [4, "M377 832L430 802M415 812l8 17"],
    [16, "M350 845L375 880 405 935"], [22, "M325 938H405"], [7, "M230 870V922L292 937M230 890H281V904M265 852V890"],
    [14, "M256 970L262 1010 272 1085"], [8, "M244 967h22"], [14, "M735 529L772 518 756 618"], [12, "M776 525L754 625"], [6, "M804 487h18M762 690h12"],
    [14, "M766 1037L760 1100 745 1190"], [8, "M770 1080L817 1103M965 988L1049 1011"], [16, "M1085 1023L1090 1085"], [14, "M1010 1115L1090 1080 1132 1073"],
    [18, "M880 1114L1000 1142"], [30, "M870 1113h4"], [5, "M962 922h21"], [24, "M905 810L945 900 965 985 1000 1120 1055 1220"],
    [22, "M95 1105L270 1092 380 1085 480 1105 580 1130 740 1190"],
  ]},
  { x: 1140, y: 0, streets: [
    [32, "M95 632L55 755"], [16, "M84 340L30 545"], [12, "M75 447L105 475 142 520"], [16, "M246 500L215 600 175 725 150 800 122 930"],
    [10, "M167 581L215 600 258 611M289 792L340 808M254 887L305 902"], [7, "M119 711L170 722M160 795L225 819M31 685L55 690"],
    [16, "M392 640L360 755 330 860"], [12, "M390 638L440 648 520 675 690 690"],
    [22, "M592 285L620 410 660 560 690 660"], [24, "M690 620L712 720 735 880 745 1060"],
    [26, "M325 890L290 950 242 1090"], [22, "M0 910L120 935 190 980 245 1045"],
    [10, "M632 381h28M736 492L804 527M845 650L840 740"], [14, "M790 340V385L870 450 955 525M770 525L755 620M680 608L750 616 850 650"],
    [6, "M808 735L857 739M735 790h22M745 912h25M800 355v12"], [16, "M905 643L955 662"], [12, "M886 785L930 797"], [10, "M826 839L852 925"],
    [10, "M800 1006L895 1018"], [24, "M720 1090L790 1015 850 935 915 898"], [14, "M560 1012L575 1000 615 1008 712 1092"],
    [10, "M430 1038L550 1075M568 1010L555 1080 543 1172"], [16, "M370 935L560 1012"], [7, "M560 1098L595 1101M84 930L98 1033M73 1010H115"], [10, "M400 1130L560 1180 600 1195M415 1138L400 1200"],
  ]},
  { x: 0, y: 1140, streets: [
    [26, "M735 50L790 80 850 113 950 128 1050 138"], [14, "M82 -20L109 124"], [14, "M112 -20L145 130 175 235M240 -30L261 130"],
    [10, "M135 30h64M45 218h54M113 286L150 295"], [18, "M343 -40L350 80 362 230 290 262 320 362"], [18, "M388 -40L400 60 430 170 455 258"],
    [8, "M455 256L510 242M440 164H536V172M403 183h32M410 57h25"], [22, "M511 242h4"], [16, "M175 235L240 208"], [9, "M238 208L216 135"],
    [12, "M175 240L120 400"], [20, "M650 20V131"], [8, "M790 95L785 185M683 186H800"], [12, "M680 292L735 303 860 302"], [20, "M850 115L868 292"],
    [4, "M668 208v30h20M697 205v35M525 465q10-4 12 4M528 468v45M545 465l8 30"],
    [24, "M165 435L240 400 310 373 440 358 510 345"], [28, "M518 347L600 338 860 310 975 295"], [44, "M1024 150L1005 250"], [26, "M975 300L1015 255"],
    [14, "M612 345V550"], [18, "M695 345L680 395 720 465 650 545"], [16, "M650 547L615 550 590 580 510 585 440 577 405 635"],
    [13, "M355 549L510 520 520 580"], [7, "M537 517L600 505M697 542L720 580"], [2, "M775 430L735 465"],
    [16, "M821 463L780 510 715 590"], [18, "M712 590L700 705 535 745"], [18, "M720 590L800 620"], [18, "M800 630L835 600 980 535 1110 490"],
    [13, "M825 595L900 502 930 545"], [10, "M800 643L920 650 922 690 957 704"], [22, "M785 620L795 800"], [18, "M795 800L955 785"],
    [16, "M825 800L848 880 840 965M1005 640L965 710 955 872"], [20, "M720 890L800 802"], [11, "M980 540L1005 630 1095 900"], [12, "M990 929L1050 910 1060 935"],
    [16, "M968 300L985 408 1050 398 1115 330"], [7, "M1058 625L1120 620"],
  ]},
  { x: 1020, y: 1140, streets: [
    [34, "M32 92L90 52 170 35 240 12"], [22, "M235 -2L350 -2 420 30 500 105"], [24, "M500 110L520 135"],
    [24, "M510 122L570 145 620 142 700 75"], [22, "M695 70L760 30 820 8"], [12, "M820 0L822 80 860 130 785 180 765 200"],
    [10, "M530 5L690 52M672 -10L660 35M535 0L512 105"], [7, "M495 0L488 65 500 80M520 70h12M572 94v30M618 100h18"],
    [10, "M345 8L311 145"], [14, "M268 15L265 130 228 200"], [7, "M238 80h22M135 170L152 125 185 140 170 180"],
    [14, "M45 100L70 150 135 178 215 200 250 245 340 290 430 300 520 308 620 330"], [9, "M66 100L82 110"],
    [16, "M143 180L122 270 100 330 45 398 -20 405"], [12, "M5 245L105 292M100 335L150 370"], [12, "M250 248L190 330 150 370 110 430 95 495"],
    [10, "M185 340L280 372M430 300L400 360M430 338L500 375 496 396M640 350L620 440M155 378L185 399"], [12, "M282 375V500"], [14, "M278 490V720"],
    [9, "M285 380L315 355 400 362"], [14, "M390 360L500 405 620 440"], [14, "M620 445L700 475 760 505 800 545 895 590"], [20, "M480 190L560 255 620 325 700 390"], [22, "M690 385L750 430 800 470"], [10, "M795 465L895 555"],
    [40, "M512 140L512 185"], [10, "M530 155L610 155 590 188M600 292L730 185"], [5, "M590 188L650 270 740 350M625 155L720 250 860 370M735 350L785 320M820 170l35 45"],
    [9, "M730 187L848 287M700 390L740 350M750 430L812 382"], [6, "M800 395l13 13"], [12, "M860 370L905 318M865 417L925 414"],
    [22, "M635 455L625 530 600 590"], [20, "M288 500L400 550 503 588"], [12, "M95 490L105 560 122 620 180 640 275 658"], [7, "M38 625L120 620 115 647M105 508h25M112 543h17M170 770h38"],
    [18, "M285 712L200 775 175 850 130 865 75 915 40 940"], [18, "M40 935L28 1020"], [20, "M285 720L330 830 350 900 415 1070"], [8, "M185 899H249"], [16, "M168 850L178 920"], [22, "M182 925v15"],
    [20, "M365 905L540 882 640 908"], [16, "M606 821L720 866M586 667L700 702 780 750 840 802"], [12, "M721 621L705 700"], [18, "M600 683L690 705"],
    [4, "M520 480l20 18M540 498L525 550M440 232l36 14M432 262h22M385 408l18-30M432 385L410 442M315 330v25M360 325v25M335 290L350 210h22M212 145l12 10-8 32M175 285l22 8M205 245v12h25M440 268v30M492 280v22M510 310v22M30 405v28M55 240v22M635 150l10 35 20-15M405 345h18M168 322h18"],
    [2, "M155 1030v45M880 250L850 285M770 255l20-20M790 288q4-14 12-4M635 285q5 14 18 0"],
  ]},
];
const voids = "M1475 905V1025L1510 1055 1500 1105 1470 1145 1450 1143 1395 1100 1360 1152 1440 1180 1515 1255 1525 1240 1508 1205 1535 1130 1555 1050 1570 1030 1585 985 1510 930ZM1425 1330L1480 1345 1450 1370 1440 1440H1397L1408 1380ZM1560 1722L1612 1730 1640 1685 1700 1700 1695 1722 1705 1735 1703 1750 1670 1748V1765L1605 1755V1748L1555 1738ZM1305 1845L1435 1867H1573V1893H1450L1320 1878Z";
const strokes = (cls: string, extra: number) => tiles.map((t) => svg`<g class=${cls} transform="translate(${t.x} ${t.y})">${t.streets.map(([w, d]) => svg`<path d=${d} stroke-width=${w + extra}></path>`)}</g>`);
const hair = svg`<g class="hair"><path d="M1998 600v28M2010 608l35 15M1940 650v40M1955 670v25M1935 705h18M1933 905v70"/></g>`;

const mapSvg = html`<svg class="map" viewBox="0 0 1085 811" role="img" aria-label="popblock">
  <defs><clipPath id="area"><path d=${outline}></path></clipPath></defs>
  <g transform="translate(206 18) scale(.33333)">
    <path class="land" d=${outline}></path>
    <g clip-path="url(#area)">${strokes("edge", 7)}<path class="voidEdge" d=${voids}></path></g>
    ${strokes("road", 0)}<path class="void" d=${voids}></path>${hair}
  </g></svg>`;

/* ---------- trees ---------- */
type Row = [number, string, string, string];
const boxRows: Row[] = [
  [0, "+", "toolbox", "Cartography Tools"], [0, "+", "toolbox", "Conversion Tools"], [0, "+", "toolbox", "Data Interoperability Tools"], [0, "-", "toolbox", "Data Management Tools"],
  ...["Archiving", "Attachments", "Data Comparison", "Distributed Geodatabase", "Domains", "Feature Class", "Features", "Fields", "File Geodatabase", "General", "Generalization", "Geodatabase Administration", "Geometric Network", "Graph", "Indexes", "Joins", "LAS Dataset", "Layers and Table Views", "Package", "Photos"].map((t): Row => [1, "+", "toolset", t]),
  [1, "-", "toolset", "Projections and Transformations"], [2, "+", "toolset", "Raster"], [2, "", "script", "Batch Project"], [2, "", "hammer", "Convert Coordinate Notation"],
  [2, "", "hammer", "Create Custom Geographic Transformation"], [2, "", "hammer", "Create Spatial Reference"], [2, "", "hammer", "Define Projection"], [2, "", "hammer", "Project"],
  ...["Raster", "Relationship Classes", "Sampling", "Subtypes"].map((t): Row => [1, "+", "toolset", t]),
];
const expander = (s: string) => s ? html`<button class="exp" aria-label=${s === "+" ? "Expand" : "Collapse"}><svg viewBox="0 0 11 11" aria-hidden="true"><path d=${s === "+" ? "M2 5.500h7M5.500 2v7" : "M2 5.500h7"}></path></svg></button>` : html`<span class="exp none"></span>`;
const panelBtns = html`<button class="pb" aria-label="Auto hide"><svg viewBox="0 0 12 14"><path d="M3 1h6v7H3zM1 8h10M6 8v5M8 1v7" fill="none" stroke="#111" stroke-width="1.500"/></svg></button><button class="pb" aria-label="Close panel"><svg viewBox="0 0 12 14"><path d="M1 2l10 10M11 2L1 12" stroke="#111" stroke-width="2"/></svg></button>`;

/* ---------- taskbar pictures, 32 x 32 ---------- */
const apps: [string, string, any][] = [
  ["Task view", "", svg`<path d="M3 10h17v18H3z" fill="#2c2c2c"/><path d="M11 4h18v18H11z" fill="#fafafa" opacity=".95"/><path d="M11 10h9v12h-9z" fill="#b4b4b4"/>`],
  ["Edge", "run", svg`<circle cx="16" cy="16" r="15" fill="#1b7fcf"/><path d="M2 12Q6 1 17 1q14 1 14 13 0 8-9 8-5-1-3-4 2-6-4-9-7-2-13 3z" fill="#45c8a0"/><path d="M2 12q7-6 13-3 3 2 3 6-6 0-6 6 1 7 10 8-9 4-16-2-6-6-4-15z" fill="#1564b4"/><path d="M18 16q-3 4 2 6 6 2 10-3-2 6-8 9-9-1-10-7 0-5 6-5z" fill="#dfe9fa"/>`],
  ["File Explorer", "run", svg`<path d="M1 27V3h10l3 4h17v20z" fill="#e8a818"/><path d="M1 29V8h30v21z" fill="#fcd050"/><path d="M6 30v-8h20v8z" fill="#1878d0"/><path d="M10 25h12" stroke="#0a4c90" stroke-width="2"/>`],
  ["Control Panel", "", svg`<path d="M1 4h30v24H1z" fill="#58b8ec" stroke="#2888c8"/><path d="M4 7h24v18H4z" fill="#d8f0fc"/><path d="M13 9a6 6 0 1 0 6 6h-6z" fill="#1878d0"/><path d="M16 7v5h5q-1-4-5-5z" fill="#f0a030"/><path d="M23 9v3M23 15v3M26 9v3M26 15v3" stroke="#1878d0" stroke-width="2"/><path d="M5 22h12" stroke="#f0a030" stroke-width="2"/><path d="M19 22h8" stroke="#1878d0" stroke-width="2"/>`],
  ["Snipping Tool", "", svg`<path d="M2 2h21v20H2z" fill="#f4f4f4" stroke="#ccc"/><path d="M5 5h14M5 5v14" stroke="#d83a20" stroke-width="3" stroke-dasharray="4 2"/><path d="M19 8v16M10 20h14" stroke="#9a9aa4" stroke-width="3"/><circle cx="28" cy="19" r="3" fill="none" stroke="#2898e0" stroke-width="2"/><circle cx="19" cy="28" r="3" fill="none" stroke="#2898e0" stroke-width="2"/>`],
  ["Firefox", "run", svg`<circle cx="16" cy="18" r="14" fill="#ff5a2c"/><path d="M16 5q4-1 5-5 9 7 9 17-1 14-14 15Q3 31 2 18q0-7 4-12 0 3 2 4 4-4 8-5z" fill="#ff8a20"/><path d="M21 0q9 7 9 17 0 7-5 11 2-14-7-19 3-4 3-9z" fill="#ffcc30"/><circle cx="16" cy="18" r="7" fill="#7438d0"/><path d="M6 13q6-2 12 2-6 1-6 5 3 5 9 2-4 7-11 4-6-5-4-13z" fill="#ff4048"/>`],
  ["Store", "", svg`<path d="M10 8V3h12v5" fill="none" stroke="#2898e0" stroke-width="3"/><path d="M1 7h30v20q0 3-3 3H4q-3 0-3-3z" fill="#14487c"/><path d="M9 12h6v6H9z" fill="#f05020"/><path d="M17 12h6v6h-6z" fill="#80bc20"/><path d="M9 20h6v6H9z" fill="#20a4f0"/><path d="M17 20h6v6h-6z" fill="#fcbc10"/>`],
  ["ArcMap", "active", svg`<circle cx="15" cy="16" r="14.500" fill="#174468"/><path d="M3 10q4-8 12-9l4 5-8 5 1 10-6 3q-6-6-3-14z" fill="#2e9a7c"/><path d="M19 19l10 10" stroke="#b08848" stroke-width="4"/><circle cx="14" cy="13" r="9" fill="#a4dce8" stroke="#f4f4f4" stroke-width="2"/><path d="M9 14q3-7 8-6l-2 9z" fill="#4ab090"/>`],
  ["Word", "run", svg`<path d="M9 2h21v28H9z" fill="#2b7cd3"/><path d="M9 2h21v8H9z" fill="#41a5ee"/><path d="M9 22h21v8H9z" fill="#103f91"/><path d="M1 9h16v15H1z" fill="#185abd"/><path d="M4 12l2 9 3-8 3 8 2-9" fill="none" stroke="#fff" stroke-width="1.800"/>`],
  ["Browser", "run", svg`<path d="M16 0l14 7v18l-14 7L2 25V7z" fill="#1a7be8"/><circle cx="16" cy="16" r="9.500" fill="#fff"/><circle cx="16" cy="16" r="7" fill="#1a7be8"/><path d="M15 8q-4 5 0 7 5 2 1 9 8-2 6-8-2-3-5-3-3-2-2-5z" fill="#fff"/>`],
];

@customElement("app-root")
export class AppRoot extends LitElement {
  static styles = css`
    :host { display: flex; flex-direction: column; height: 100vh; overflow: hidden; background: #f0f0f0; color: #1a1a1a; font: 14px/18px "Open Sans", "Noto Sans", sans-serif; }
    * { box-sizing: border-box; }
    button, input, select { font: inherit; color: inherit; margin: 0; padding: 0; border: 0; background: none; border-radius: 0; }
    svg { display: block; flex: none; }
    .title { display: flex; align-items: center; height: 28px; background: #eef3f9; padding: 0 4px 0 2px; gap: 5px; color: #111; }
    .title h1 { flex: 1; font-size: 14px; font-weight: 400; margin: 0; }
    .wc { width: 58px; height: 28px; display: grid; place-items: center; }
    .wc svg { width: 13px; height: 13px; fill: none; stroke: #111; stroke-width: 1; }
    .bars { background: linear-gradient(90deg, #f0f0f0, #fafafa 70%); }
    .menu { display: flex; height: 33px; align-items: center; padding-left: 15px; gap: 20px; }
    .row { display: flex; height: 33px; gap: 2px; padding-left: 3px; }
    .tb { display: flex; align-items: center; background: linear-gradient(#fdfdfd, #ededed); border-radius: 3px; height: 32px; }
    .grow { flex: 1; }
    .grip { width: 3px; height: 20px; margin: 0 2px 0 3px; background: repeating-linear-gradient(#a8a8a8 0 3px, transparent 3px 6px); }
    .sep { width: 1px; height: 18px; margin: 0 3px; background: #bdbdbd; }
    .tool { width: 28px; height: 28px; display: grid; place-items: center; flex: none; }
    .ic { width: 20px; height: 20px; }
    .on { border: 2px solid #2c86d2; background: #d9ebf9; }
    .dim { border: 2px solid #a8bccb; background: #dbe5ec; }
    .caret { width: 8px; height: 5px; fill: #111; margin: 0 2px; }
    .off { fill: #aaa; }
    .drop { display: flex; align-items: center; height: 26px; padding: 0 3px 0 4px; gap: 2px; white-space: nowrap; }
    .grip + .drop { padding-left: 6px; }
    .end { align-self: stretch; width: 14px; margin-left: auto; background: linear-gradient(#f0f0f0, #9a9a9a); display: grid; place-items: center; flex: none; }
    .end.more { margin-left: 6px; }
    .end svg { width: 10px; height: 28px; }
    .combo { display: flex; align-items: center; height: 27px; border: 1px solid #d4d4d4; background: #fdfdfd; padding: 0 5px 0 3px; }
    .combo select, .combo input { flex: 1; min-width: 0; appearance: none; height: 20px; }
    .combo.dark { border: 2px solid #8a8a8a; width: 186px; background: #fff; }
    .w82 { width: 82px; color: #777; }
    .w74 { width: 74px; } .w155 { width: 155px; } .w224 { flex: 1; background: #f6f6f6; }
    .combo .hl { background: #0078d7; color: #2c5d8c; flex: none; height: 18px; }
    .combo .hl34 { width: 36px; margin-right: auto; } .combo .hl116 { width: 112px; margin-right: auto; }
    .chev { width: 12px; height: 7px; fill: none; stroke: #999; stroke-width: 1.3; }
    .box { width: 94px; height: 23px; border: 2px solid #777; background: #fff; margin: 0 6px; }
    .main { flex: 1; display: grid; grid-template-columns: 346px minmax(0, 1fr) 452px; column-gap: 6px; min-height: 0; }
    .panel { display: flex; flex-direction: column; min-height: 0; position: relative; }
    .ph { display: flex; align-items: center; height: 24px; padding: 0 1px 0 5px; background: linear-gradient(90deg, #bccbdc, #d5e2f0); flex: none; }
    .ph.blue { background: linear-gradient(90deg, #98b3d2, #b6cfec); }
    .ph h2 { flex: 1; font-size: 14px; font-weight: 400; margin: 0; color: #333; }
    .pb { width: 20px; height: 20px; display: grid; place-items: center; } .pb svg { width: 10px; height: 12px; }
    .toct { display: flex; align-items: center; height: 33px; padding-left: 4px; background: linear-gradient(#fdfdfd, #f0f0f0); flex: none; }
    .toct .sep { margin: 0 3px; }
    .tree { flex: 1; background: #fff; border: 1px solid #8c939c; border-top-width: 2px; margin: 0 1px 1px 0; padding: 1px 0; min-height: 0; overflow: hidden; display: flex; }
    .tree ul { list-style: none; margin: 0; padding: 0; flex: 1; }
    .tree li, .nodes li { display: flex; align-items: center; white-space: nowrap; }
    .toc li { height: 22px; gap: 7px; }
    .toc .i0 { padding-left: 10px; } .toc .i1 { padding-left: 34px; } .toc .i2 { padding-left: 58px; } .toc .i3 { padding-left: 98px; }
    .toc b { font-weight: 700; }
    .toc .i2 { gap: 10px; } .toc .i2 .sel { margin-left: -3px; }
    .chk { appearance: none; width: 14px; height: 14px; border: 2px solid #333; background: #fff; display: grid; place-items: center; }
    .chk::before { content: ""; width: 8px; height: 4px; border: solid #111; border-width: 0 0 2px 2px; transform: rotate(-45deg); margin-top: -3px; }
    .sel { background: #0078d7; color: #fff; padding: 2px 3px; line-height: 18px; }
    .sw { width: 19px; height: 14px; background: #c8f9f6; border: 1px solid #667; }
    .exp { width: 11px; height: 11px; border: 1px solid #8c939c; border-radius: 1px; background: #f8f8f8; flex: none; margin-top: 3px; }
    .exp svg { width: 9px; height: 9px; stroke: #31539b; stroke-width: 1.4; }
    .none { visibility: hidden; }
    .nodes { margin: 0 22px -3px 0 !important; display: grid; grid-template-rows: repeat(36, minmax(0, 1fr)); padding-left: 10px !important; }
    .nodes li { gap: 6px; }
    .nodes .ic { width: 21px; height: 21px; }
    .nodes .n1 { padding-left: 24px; } .nodes .n2 { padding-left: 48px; }
    .nodes .pick { background: #0078d7; color: #fff; outline: 1px dotted #d08030; padding: 1px 2px; margin-left: -2px; }
    .right .tree { margin: 0; background: #fff; padding-bottom: 0; }
    .sbar { width: 20px; background: #f0f0f0; display: flex; justify-content: center; padding: 60px 0 276px; }
    .sbar i, .vs i, .hs i { background: #8a8a8a; border-radius: 1px; }
    .sbar i { width: 3px; }
    .view { display: grid; grid-template-columns: minmax(0, 1fr) 23px; grid-template-rows: minmax(0, 1fr) 22px; border-top: 2px solid #868686; border-left: 2px solid #868686; min-height: 0; }
    .canvas { background: #fff; min-height: 0; overflow: hidden; }
    .map { width: 100%; height: 100%; }
    .vs { display: flex; justify-content: center; padding: 20px 0 23px 0; border-left: 1px solid #ddd; }
    .vs i { width: 3px; }
    .foot { display: flex; align-items: center; border-top: 1px solid #ddd; }
    .vb { width: 21px; height: 21px; display: grid; place-items: center; } .vb svg { width: 11px; height: 12px; }
    .vb.cur { background: #cce6fb; }
    .foot .sep { margin: 0 5px; }
    .hs { flex: 1; display: flex; padding: 0 23px 0 20px; } .hs i { flex: 1; height: 3px; }
    .land { fill: #c8f9f6; stroke: #74807e; stroke-width: 3.5; stroke-linejoin: round; }
    .edge, .voidEdge { fill: none; stroke: #74807e; stroke-linecap: square; } .voidEdge { stroke-width: 7; }
    .road { fill: none; stroke: #fff; stroke-linecap: square; } .void { fill: #fff; }
    .hair { fill: none; stroke: #74807e; stroke-width: 3; }
    .call { position: absolute; border: 5px solid #e21d1f; pointer-events: none; }
    .c1 { left: -11px; top: 86px; width: 269px; height: 41px; }
    .c2 { left: -3px; top: 560px; width: 333px; height: 42px; }
    .ptr { position: absolute; left: 232px; top: 702px; width: 73px; height: 26px; fill: #e21d1f; }
    .status { display: flex; align-items: center; height: 26px; padding: 0 162px 0 3px; justify-content: space-between; border-bottom: 1px solid #b4bcc8; background: #f0f0f0; }
    .task { height: 59px; display: grid; grid-template-columns: 1fr auto 1fr; align-items: center; color: #222; background: linear-gradient(90deg, #dfedf8 0, #dcebfa 22%, #d2e0fb 32%, #d6defa 45%, #d8d9ee 52%, #d3e0fa 57%, #d8d9ec 60%, #deedf8 65%, #e0eefa); }
    .news { display: flex; align-items: center; gap: 7px; padding-left: 24px; text-align: left; line-height: 20px; }
    .news svg { width: 34px; height: 36px; margin-top: -6px; } .news .txt { display: flex; flex-direction: column; margin-top: -3px; } .news small { font-size: 14px; color: #555; }
    .badge { font: 12px "Open Sans", sans-serif; fill: #fff; text-anchor: middle; }
    .apps { display: flex; align-items: center; }
    .app { width: 55px; height: 52px; display: flex; align-items: center; justify-content: center; position: relative; border-radius: 5px; }
    .app svg { width: 30px; height: 30px; }
    .run::after, .active::after { content: ""; position: absolute; bottom: 2px; width: 7px; height: 4px; border-radius: 2px; background: #7c8290; }
    .active::before { content: ""; position: absolute; inset: 2px 4px; background: #eef2fc; border-radius: 5px; z-index: 0; box-shadow: 0 0 1px #99a; }
    .active svg { position: relative; } .active::after { width: 18px; background: #0a74c8; }
    .search { display: flex; align-items: center; gap: 12px; width: 272px; height: 39px; margin: 0 4px; border-radius: 20px; background: #f2f6fe; border: 1px solid #c8d0e2; padding: 0 8px 0 13px; }
    .search input { flex: 1; min-width: 0; font-size: 16px; } .search input::placeholder { color: #555; opacity: 1; }
    .search .mag { width: 20px; height: 20px; } .search .ten { width: 48px; height: 32px; }
    .tray { display: flex; justify-content: flex-end; align-items: center; padding-right: 24px; gap: 10px; }
    .tray svg { width: 21px; height: 20px; }
    .lang { display: flex; flex-direction: column; align-items: center; line-height: 19px; width: 24px; margin: 0 14px 0 16px; }
    .clock { text-align: right; line-height: 20px; margin-left: 12px; display: flex; flex-direction: column; }
  `;

  render() {
    return html`
      <header class="title">${icon("arcmap")}<h1>Untitled - ArcMap</h1>
        <div class="apps">
          <button class="wc" aria-label="Minimize"><svg viewBox="0 0 13 13"><path d="M0 6.500h13"/></svg></button>
          <button class="wc" aria-label="Restore"><svg viewBox="0 0 13 13"><path d="M1 4h8v8H1zM4 4V1h8v8H9"/></svg></button>
          <button class="wc" aria-label="Close"><svg viewBox="0 0 13 13"><path d="M1 1l11 11M12 1L1 12"/></svg></button>
        </div></header>
      <div class="bars">
        <nav class="menu">${["File", "Edit", "View", "Bookmarks", "Insert", "Selection", "Geoprocessing", "Customize", "Windows", "Help"].map((m) => html`<button>${m}</button>`)}</nav>
        <div class="row">
          <div class="tb">${grip}${tools("zoomIn zoomOut hand* globe | shrink grow | back fwd | selectFeat V clearSel | arrow | info bolt popup | measure | find route goxy | time | viewer")}${endCap()}</div>
          <div class="tb">${grip}${tools("newDoc open save print | cut copy paste del | undo redo | addData V |")}<label class="combo dark"><input aria-label="Map scale" value="1:8,003">${chev}</label>${tools("| editTb* | tocWin catalog searchWin toolWin python | model")}${endCap()}</div>
        </div>
        <div class="row">
          <div class="tb">${grip}${drop("Labeling")}${tools("lab1 lab2 lab3 lab4 lab5 lab6 |")}<label class="combo w82"><select aria-label="Label quality" disabled><option>Fast</option></select>${chev}</label>${endCap()}</div>
          <div class="tb">${grip}${tools("lyZin lyZout lyPan lyFull ly11 | lyIn lyOut | lyBack lyFwd")}<label class="combo w74"><input class="hl hl34" aria-label="Layout zoom" value="100%">${chev}</label>${tools("| draft~ frameF layoutSw dataDr*")}${endCap()}</div>
          <div class="tb">${grip}${drop("ArcBruTile 0.7")}${sep}${["OpenStreetMap", "Bing", "Stamen", "MapBox", "CartoDB", "MapQuest", "Strava"].map(drop)}${endCap()}</div>
        </div>
        <div class="row">
          <div class="tb">${grip}${drop("Editor")}${tools("| edArrow edAnno | seg arc poly v star | edv resh cutp split")}${endCap(true)}</div>
          <div class="tb">${grip}${tools("tree refresh table | first prev")}<label class="combo w155"><input class="hl hl116" aria-label="Show name" value="Show Name">${chev}</label>${tools("play")}${endCap(true)}</div>
          <div class="tb">${grip}${tools("t1 t2 t3 t4 t5 | t6 sphere | t7 refresh t8 t9 t10 | t11 t12")}${endCap()}</div>
          <div class="tb grow">${grip}${drop("Georeferencing")}${sep}<label class="combo w224"><select aria-label="Georeferencing layer" disabled><option></option></select>${chev}</label>${tools("g1 g2 g3 g4 g5 g6 g7 g8 v")}<input class="box" aria-label="Rotation">${endCap()}</div>
        </div>
      </div>
      <main class="main">
        <section class="panel">
          <div class="ph"><h2>Table Of Contents</h2>${panelBtns}</div>
          <div class="toct">${tools("listDraw listSrc* listVis listSel | options")}</div>
          <div class="tree"><ul class="toc">
            <li class="i0">${expander("-")}${icon("layers")}<b>Layers</b></li>
            <li class="i1">${expander("-")}${icon("folder")}<span>D:\\file\\chizar</span></li>
            <li class="i2">${expander("-")}<input class="chk" id="pop" type="checkbox" checked><label class="sel" for="pop">popblock</label></li>
            <li class="i3"><span class="sw"></span></li>
          </ul></div>
        </section>
        <section class="view">
          <div class="canvas">${mapSvg}</div>
          <div class="vs"><i></i></div>
          <div class="foot">
            <button class="vb cur" aria-label="Data view"><svg viewBox="0 0 11 12"><path d="M1 1h9v10H1z" fill="#d8e8b0" stroke="#333" stroke-width="1.500"/><path d="M3 9l5-6" stroke="#4a8a3a" stroke-width="2"/></svg></button>
            <button class="vb" aria-label="Layout view"><svg viewBox="0 0 11 12"><path d="M1 1h6l3 3v7H1z" fill="#fff" stroke="#333" stroke-width="1.300"/><path d="M3 5h5v4H3z" fill="#678"/></svg></button>
            ${sep}
            <button class="vb" aria-label="Refresh"><svg viewBox="0 0 11 12"><path d="M1 5q2-5 8-2M10 7q-2 5-8 2" fill="none" stroke="#1c5ab0" stroke-width="1.700"/><path d="M10 0v5H6zM1 12V7h4z" fill="#1c5ab0"/></svg></button>
            <button class="vb" aria-label="Pause"><svg viewBox="0 0 11 12"><path d="M3.500 2v8M7.500 2v8" stroke="#1c5ab0" stroke-width="2"/></svg></button>
            <div class="hs"><i></i></div>
          </div><div></div>
        </section>
        <section class="panel right">
          <div class="ph blue"><h2>ArcToolbox</h2>${panelBtns}</div>
          <div class="tree"><ul class="nodes">${boxRows.map(([l, e, i, t]) => html`<li class="n${l}">${expander(e)}${icon(i)}<span class=${classMap({ pick: t === "Define Projection" })}>${t}</span></li>`)}</ul><div class="sbar"><i></i></div></div>
          <div class="call c1"></div><div class="call c2"></div>
          <svg class="ptr" viewBox="0 0 73 26" aria-hidden="true"><path d="M0 13L25 1v8l47-1v5l-47 2v10z"/></svg>
        </section>
      </main>
      <footer class="status"><span>Geoprocessing tool to record the coordinate system information for the specific input dataset or feature class.</span><span>2712.162&nbsp; 40.441 Meters</span></footer>
      <div class="task">
        <button class="news"><svg viewBox="0 0 34 36"><path d="M2 15h28v15H2z" fill="#0c2350"/><path d="M22 15h8v15h-4z" fill="#c8203c"/><path d="M14 15l6 1 4 5 2 9H13l3-7z" fill="#fff"/><circle cx="24" cy="11" r="10" fill="#c42b1c"/><text class="badge" x="24" y="15">3</text></svg><span class="txt"><span>CLE - TEX</span><small>Video highlight</small></span></button>
        <div class="apps">
          <button class="app" aria-label="Start"><svg viewBox="0 0 30 30"><path d="M0 0h14v14H0zM16 0h14v14H16zM0 16h14v14H0zM16 16h14v14H16z" fill="#1490df"/></svg></button>
          <label class="search"><svg class="mag" viewBox="0 0 20 20"><circle cx="9" cy="8" r="6.500" fill="none" stroke="#222" stroke-width="2"/><path d="M13 13l5 6" stroke="#222" stroke-width="2"/></svg><input placeholder="Search" aria-label="Search">
            <svg class="ten" viewBox="0 0 48 32"><path d="M37 18l7 12" stroke="#c83040" stroke-width="4"/><ellipse cx="31" cy="11" rx="9" ry="11" transform="rotate(-25 31 11)" fill="#f4f4f4" stroke="#d86a48" stroke-width="2.500"/><path d="M24 6l13 12M27 2l12 12M23 12l10 9M33 1L23 15M38 6L27 20M40 12l-7 10" stroke="#999"/><path d="M36 22l2-7 3 8" stroke="#c83040" stroke-width="2" fill="none"/><circle cx="12" cy="21" r="11" fill="#c0dc20"/><path d="M3 16q9 0 8 15M20 14q-2 9 3 9" fill="none" stroke="#f4fcc0" stroke-width="1.500"/></svg></label>
          ${apps.map(([n, c, g]) => html`<button class="app ${c}" aria-label=${n}><svg viewBox="0 0 32 32">${g}</svg></button>`)}
        </div>
        <div class="tray">
          <svg viewBox="0 0 21 20"><path d="M4 13l6-6 6 6" fill="none" stroke="#222" stroke-width="1.600"/></svg>
          <span class="lang"><span lang="fa">فا</span><span>FA</span></span>
          <svg viewBox="0 0 21 20"><path d="M1 8q9-9 19 0M4 11q6-6 13 0M7 14q3-3 7 0" fill="none" stroke="#222" stroke-width="1.600"/><circle cx="10.500" cy="17" r="1.800" fill="#222"/></svg>
          <svg viewBox="0 0 21 20"><path d="M1 7h4l5-4v14l-5-4H1z" fill="none" stroke="#222" stroke-width="1.400"/><path d="M13 7q2 3 0 6M15 5q4 5 0 10M18 3q5 7 0 14" fill="none" stroke="#222" stroke-width="1.300"/></svg>
          <svg viewBox="0 0 21 20"><path d="M1 4h16v12H1z" fill="none" stroke="#222" stroke-width="1.600"/><path d="M3 6h10v8H3z" fill="#222"/><path d="M18.500 8v4" stroke="#222" stroke-width="2.500"/></svg>
          <span class="clock"><span>13:18</span><span>8/24/2025</span></span>
        </div>
      </div>`;
  }
}
